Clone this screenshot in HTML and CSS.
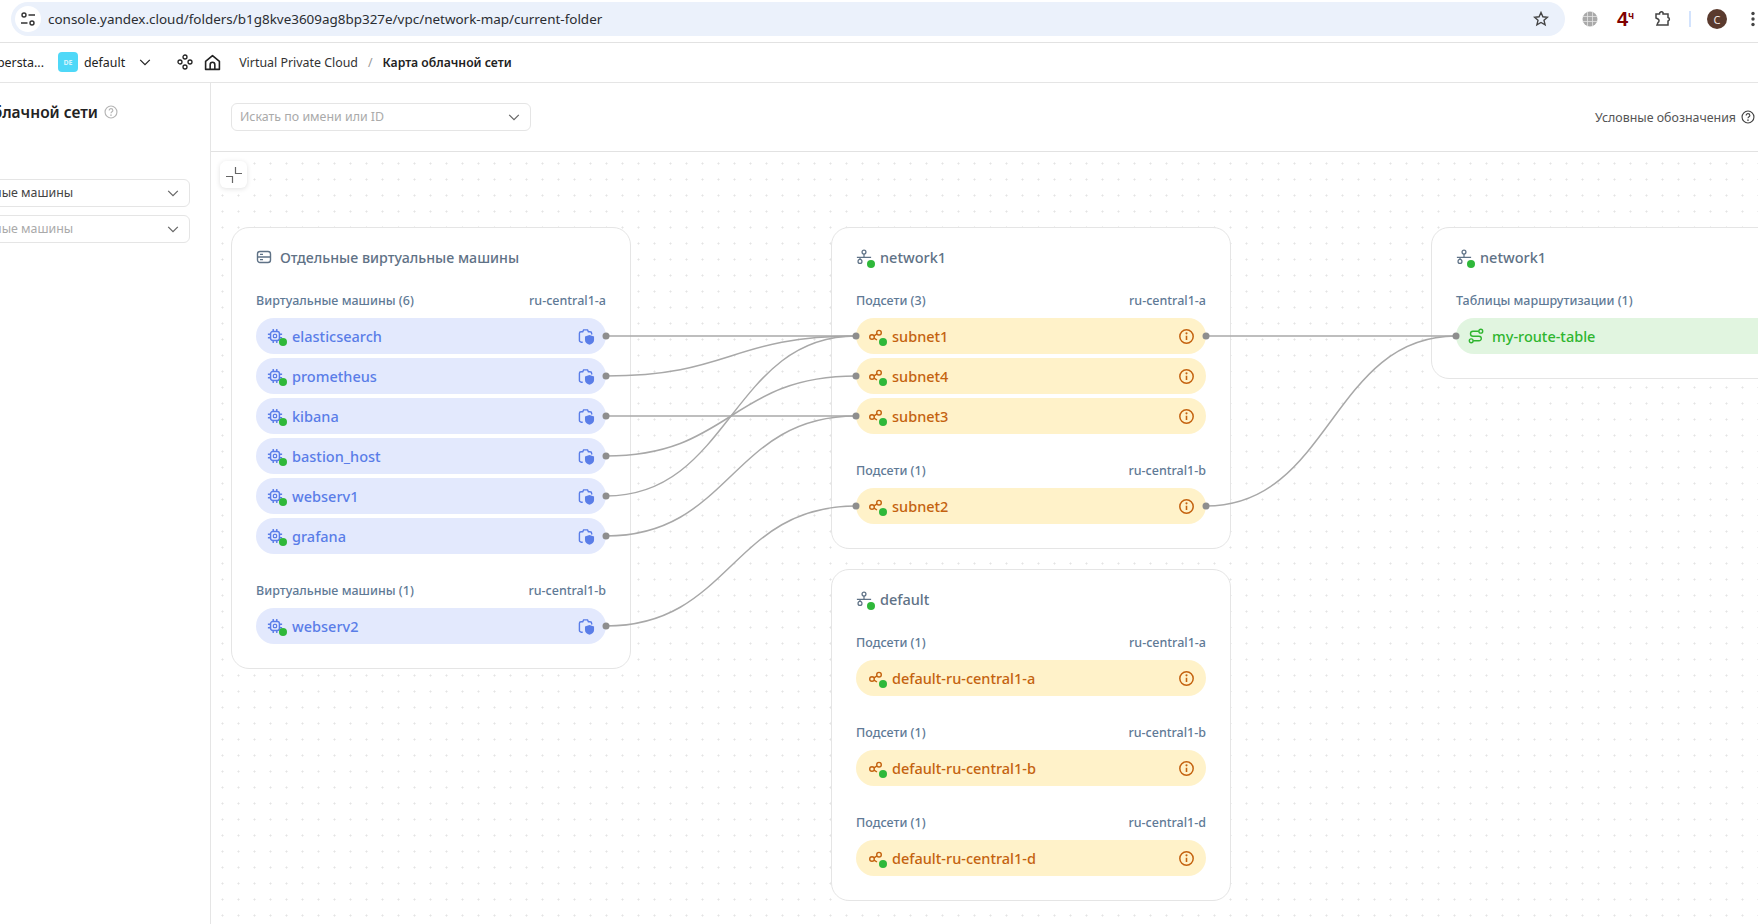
FILE: index.html
```html
<!DOCTYPE html>
<html lang="ru">
<head>
    <meta charset="UTF-8">
    <title>Карта облачной сети</title>
    <link rel="stylesheet" href="styles.css">
</head>
<body>
    <svg class="sprite" width="0" height="0">
        <symbol id="i-cpu" viewBox="0 0 18 18">
            <rect x="4" y="4" width="10" height="10" rx="2.5" fill="none" stroke="currentColor" stroke-width="1.700"/>
            <rect x="7.2" y="7.2" width="3.6" height="3.6" rx="1" fill="none" stroke="currentColor" stroke-width="1.400"/>
            <path d="M7 1v3M11 1v3M7 14v3M11 14v3M1 7h3M1 11h3M14 7h3M14 11h3" stroke="currentColor" stroke-width="1.600" fill="none"/>
        </symbol>
        <symbol id="i-shield" viewBox="0 0 18 18">
            <path d="M5 15H3.4A1.9 1.9 0 0 1 1.5 13V5.6C1.5 4.6 2.3 4 3.2 4H5l.9-2h4.2l.9 2h1.7c1 0 1.800.8 1.800 1.800V7" fill="none" stroke="currentColor" stroke-width="1.5"/>
            <path d="M12.200 7.500l4.800 1.600v3.600c0 2.500-2 4.200-4.800 5-2.800-.8-4.800-2.500-4.800-5V9.100z" fill="currentColor"/>
        </symbol>
        <symbol id="i-share" viewBox="0 0 18 18">
            <circle cx="6" cy="10" r="2.300" fill="none" stroke="currentColor" stroke-width="1.400"/>
            <circle cx="13" cy="5.700" r="2.300" fill="none" stroke="currentColor" stroke-width="1.400"/>
            <path d="M8 8.800l3-1.900M8 11.200l3 1.800" fill="none" stroke="currentColor" stroke-width="1.400"/>
        </symbol>
        <symbol id="i-info" viewBox="0 0 16 16">
            <circle cx="8" cy="8" r="6.300" fill="none" stroke="currentColor" stroke-width="1.400"/>
            <path d="M8 7.300v4" fill="none" stroke="currentColor" stroke-width="1.500"/>
            <circle cx="8" cy="5" r="1" fill="currentColor"/>
        </symbol>
        <symbol id="i-network" viewBox="0 0 18 18">
            <circle cx="9" cy="3.500" r="2.200" fill="none" stroke="currentColor" stroke-width="1.400"/>
            <circle cx="4.500" cy="14" r="2.200" fill="none" stroke="currentColor" stroke-width="1.400"/>
            <path d="M1 9.500h16M9 5.700v3.800M4.500 9.500v2.300" fill="none" stroke="currentColor" stroke-width="1.400"/>
        </symbol>
        <symbol id="i-route" viewBox="0 0 16 16">
            <circle cx="12.800" cy="3.200" r="1.900" fill="none" stroke="currentColor" stroke-width="1.400"/>
            <circle cx="3.200" cy="12.800" r="1.900" fill="none" stroke="currentColor" stroke-width="1.400"/>
            <path d="M10.800 3.200H5a2.500 2.500 0 0 0 0 5h6a2.300 2.300 0 0 1 0 4.600H5.200" fill="none" stroke="currentColor" stroke-width="1.400"/>
        </symbol>
        <symbol id="i-chevron" viewBox="0 0 16 16">
            <path d="M2.500 5.500L8 11l5.500-5.500" fill="none" stroke="currentColor" stroke-width="1.400"/>
        </symbol>
        <symbol id="i-help" viewBox="0 0 16 16">
            <circle cx="8" cy="8" r="6.800" fill="none" stroke="currentColor" stroke-width="1.300"/>
            <path d="M5.900 6.300A2.100 2.100 0 0 1 10.100 6.300C10.100 7.800 8 7.800 8 9.500" fill="none" stroke="currentColor" stroke-width="1.300"/>
            <circle cx="8" cy="11.600" r=".9" fill="currentColor"/>
        </symbol>
    </svg>

    <div class="browser-bar">
        <div class="address">
            <span class="site-btn">
                <svg width="16" height="16" viewBox="0 0 16 16"><circle cx="4" cy="4" r="2" fill="none" stroke="#333" stroke-width="1.400"/><path d="M8.500 4H15M1 12h6.500" stroke="#333" stroke-width="1.400"/><circle cx="12" cy="12" r="2" fill="none" stroke="#333" stroke-width="1.400"/></svg>
            </span>
            <span class="url">console.yandex.cloud/folders/b1g8kve3609ag8bp327e/vpc/network-map/current-folder</span>
            <svg class="star" width="16" height="16" viewBox="0 0 16 16"><path d="M8 1.500l1.900 4.300 4.600.4-3.500 3.100 1.100 4.600L8 11.500l-4.100 2.400L5 9.300 1.500 6.200l4.600-.4z" fill="none" stroke="#444" stroke-width="1.400"/></svg>
        </div>
        <div class="browser-tools">
            <svg width="16" height="16" viewBox="0 0 16 16"><circle cx="8" cy="8" r="7.500" fill="#a9a9a9"/><path d="M.5 5.500h15M.5 10.500h15M5.500 .5v15M10.500 .5v15" stroke="#e4e4e4" stroke-width=".8"/></svg>
            <span class="weather">4<sup>ч</sup></span>
            <svg width="18" height="18" viewBox="0 0 18 18"><path d="M2 4h3.500a2 2 0 0 1 3.500-1.500V4h5v3.500a1.800 1.800 0 0 1 0 3.500V15H3l1-2.500a2 2 0 0 0 0-3.500L2 8z" fill="none" stroke="#444" stroke-width="1.500"/></svg>
            <span class="tool-sep"></span>
            <span class="avatar">C</span>
            <svg width="4" height="16" viewBox="0 0 4 16"><circle cx="2" cy="2.500" r="1.700" fill="#444"/><circle cx="2" cy="8" r="1.700" fill="#444"/><circle cx="2" cy="13.500" r="1.700" fill="#444"/></svg>
        </div>
    </div>

    <header class="topbar">
        <span class="org">persta...</span>
        <span class="badge">DE</span>
        <span class="folder">default</span>
        <svg class="ic chev-dark"><use href="#i-chevron"/></svg>
        <svg class="ic nodes" viewBox="0 0 16 16"><g fill="none" stroke="#222" stroke-width="1.300"><circle cx="8" cy="3" r="2"/><circle cx="3" cy="8" r="2"/><circle cx="13" cy="8" r="2"/><circle cx="8" cy="13" r="2"/></g></svg>
        <svg class="ic home" viewBox="0 0 16 16"><path d="M1.500 14.500V7L8 1.500 14.500 7v7.500zM5.800 14.500V10a2.200 2.200 0 0 1 4.400 0v4.500" fill="none" stroke="#222" stroke-width="1.500" stroke-linejoin="round"/></svg>
        <span class="crumb">Virtual Private Cloud</span>
        <span class="crumb-sep">/</span>
        <span class="crumb-current">Карта облачной сети</span>
    </header>

    <div class="main">
        <aside class="sidebar">
            <div class="side-title">
                <h1>Карта облачной сети</h1>
                <svg class="ic help-light"><use href="#i-help"/></svg>
            </div>
            <div class="side-select">
                <span>Виртуальные машины</span>
                <svg class="ic chev"><use href="#i-chevron"/></svg>
            </div>
            <div class="side-select placeholder">
                <span>Виртуальные машины</span>
                <svg class="ic chev"><use href="#i-chevron"/></svg>
            </div>
        </aside>

        <section class="content">
            <div class="toolbar">
                <div class="search">
                    <span>Искать по имени или ID</span>
                    <svg class="ic chev"><use href="#i-chevron"/></svg>
                </div>
                <div class="legend">
                    <span>Условные обозначения</span>
                    <svg class="ic help"><use href="#i-help"/></svg>
                </div>
            </div>

            <div class="canvas">
                <button class="fit-btn">
                    <svg width="16" height="16" viewBox="0 0 16 16"><path d="M9.500 0v6.500H16M0 9.500h6.500V16" fill="none" stroke="#666" stroke-width="1.200"/></svg>
                </button>

                <div class="column">
                    <div class="card">
                        <div class="card-head card-head-long">
                            <svg class="ic head-ic" viewBox="0 0 16 16"><rect x="1.500" y="2.500" width="13" height="11" rx="2.500" fill="none" stroke="currentColor" stroke-width="1.400"/><path d="M1.500 8h13M4 5.300h3M4 10.700h3" fill="none" stroke="currentColor" stroke-width="1.300"/></svg>
                            <span>Отдельные виртуальные машины</span>
                        </div>
                        <div class="group">
                            <div class="group-label"><span>Виртуальные машины (6)</span><span>ru-central1-a</span></div>
                            <div class="row vm"><span class="row-ic"><svg><use href="#i-cpu"/></svg><i class="status"></i></span><span class="row-name">elasticsearch</span><svg class="row-end"><use href="#i-shield"/></svg></div>
                            <div class="row vm"><span class="row-ic"><svg><use href="#i-cpu"/></svg><i class="status"></i></span><span class="row-name">prometheus</span><svg class="row-end"><use href="#i-shield"/></svg></div>
                            <div class="row vm"><span class="row-ic"><svg><use href="#i-cpu"/></svg><i class="status"></i></span><span class="row-name">kibana</span><svg class="row-end"><use href="#i-shield"/></svg></div>
                            <div class="row vm"><span class="row-ic"><svg><use href="#i-cpu"/></svg><i class="status"></i></span><span class="row-name">bastion_host</span><svg class="row-end"><use href="#i-shield"/></svg></div>
                            <div class="row vm"><span class="row-ic"><svg><use href="#i-cpu"/></svg><i class="status"></i></span><span class="row-name">webserv1</span><svg class="row-end"><use href="#i-shield"/></svg></div>
                            <div class="row vm"><span class="row-ic"><svg><use href="#i-cpu"/></svg><i class="status"></i></span><span class="row-name">grafana</span><svg class="row-end"><use href="#i-shield"/></svg></div>
                        </div>
                        <div class="group">
                            <div class="group-label"><span>Виртуальные машины (1)</span><span>ru-central1-b</span></div>
                            <div class="row vm"><span class="row-ic"><svg><use href="#i-cpu"/></svg><i class="status"></i></span><span class="row-name">webserv2</span><svg class="row-end"><use href="#i-shield"/></svg></div>
                        </div>
                    </div>
                </div>

                <div class="column">
                    <div class="card">
                        <div class="card-head">
                            <span class="head-wrap"><svg class="ic head-ic"><use href="#i-network"/></svg><i class="status"></i></span>
                            <span>network1</span>
                        </div>
                        <div class="group">
                            <div class="group-label"><span>Подсети (3)</span><span>ru-central1-a</span></div>
                            <div class="row subnet"><span class="row-ic"><svg><use href="#i-share"/></svg><i class="status"></i></span><span class="row-name">subnet1</span><svg class="row-end"><use href="#i-info"/></svg></div>
                            <div class="row subnet"><span class="row-ic"><svg><use href="#i-share"/></svg><i class="status"></i></span><span class="row-name">subnet4</span><svg class="row-end"><use href="#i-info"/></svg></div>
                            <div class="row subnet"><span class="row-ic"><svg><use href="#i-share"/></svg><i class="status"></i></span><span class="row-name">subnet3</span><svg class="row-end"><use href="#i-info"/></svg></div>
                        </div>
                        <div class="group">
                            <div class="group-label"><span>Подсети (1)</span><span>ru-central1-b</span></div>
                            <div class="row subnet"><span class="row-ic"><svg><use href="#i-share"/></svg><i class="status"></i></span><span class="row-name">subnet2</span><svg class="row-end"><use href="#i-info"/></svg></div>
                        </div>
                    </div>
                    <div class="card">
                        <div class="card-head">
                            <span class="head-wrap"><svg class="ic head-ic"><use href="#i-network"/></svg><i class="status"></i></span>
                            <span>default</span>
                        </div>
                        <div class="group">
                            <div class="group-label"><span>Подсети (1)</span><span>ru-central1-a</span></div>
                            <div class="row subnet"><span class="row-ic"><svg><use href="#i-share"/></svg><i class="status"></i></span><span class="row-name">default-ru-central1-a</span><svg class="row-end"><use href="#i-info"/></svg></div>
                        </div>
                        <div class="group">
                            <div class="group-label"><span>Подсети (1)</span><span>ru-central1-b</span></div>
                            <div class="row subnet"><span class="row-ic"><svg><use href="#i-share"/></svg><i class="status"></i></span><span class="row-name">default-ru-central1-b</span><svg class="row-end"><use href="#i-info"/></svg></div>
                        </div>
                        <div class="group">
                            <div class="group-label"><span>Подсети (1)</span><span>ru-central1-d</span></div>
                            <div class="row subnet"><span class="row-ic"><svg><use href="#i-share"/></svg><i class="status"></i></span><span class="row-name">default-ru-central1-d</span><svg class="row-end"><use href="#i-info"/></svg></div>
                        </div>
                    </div>
                </div>

                <div class="column">
                    <div class="card">
                        <div class="card-head">
                            <span class="head-wrap"><svg class="ic head-ic"><use href="#i-network"/></svg><i class="status"></i></span>
                            <span>network1</span>
                        </div>
                        <div class="group">
                            <div class="group-label"><span>Таблицы маршрутизации (1)</span></div>
                            <div class="row route"><span class="row-ic"><svg><use href="#i-route"/></svg></span><span class="row-name">my-route-table</span></div>
                        </div>
                    </div>
                </div>

                <!-- links between nodes, coordinates are relative to the canvas -->
                <svg class="links" viewBox="0 0 1547 772">
                    <g class="wires">
                        <path d="M395 184C520 184 520 184 645 184"/>
                        <path d="M395 224C520 224 520 184 645 184"/>
                        <path d="M395 264C520 264 520 264 645 264"/>
                        <path d="M395 304C520 304 520 224 645 224"/>
                        <path d="M395 344C520 344 520 184 645 184"/>
                        <path d="M395 384C520 384 520 264 645 264"/>
                        <path d="M395 474C520 474 520 354 645 354"/>
                        <path d="M995 184C1120 184 1120 184 1245 184"/>
                        <path d="M995 354C1120 354 1120 184 1245 184"/>
                    </g>
                    <g class="ports">
                        <circle cx="395" cy="184" r="3.500"/>
                        <circle cx="395" cy="224" r="3.500"/>
                        <circle cx="395" cy="264" r="3.500"/>
                        <circle cx="395" cy="304" r="3.500"/>
                        <circle cx="395" cy="344" r="3.500"/>
                        <circle cx="395" cy="384" r="3.500"/>
                        <circle cx="395" cy="474" r="3.500"/>
                        <circle cx="645" cy="184" r="3.500"/>
                        <circle cx="645" cy="224" r="3.500"/>
                        <circle cx="645" cy="264" r="3.500"/>
                        <circle cx="645" cy="354" r="3.500"/>
                        <circle cx="995" cy="184" r="3.500"/>
                        <circle cx="995" cy="354" r="3.500"/>
                        <circle cx="1245" cy="184" r="3.500"/>
                    </g>
                </svg>
            </div>
        </section>
    </div>
</body>
</html>
```

FILE: styles.css
```css
* {
    box-sizing: border-box;
}

html, body {
    margin: 0;
    height: 100%;
}

body {
    width: 1758px;
    height: 924px;
    overflow: hidden;
    display: flex;
    flex-direction: column;
    background: #ffffff;
    color: #222;
    font-family: "Noto Sans", Arial, sans-serif;
    font-size: 12.4px;
}

.sprite {
    position: absolute;
}

.ic {
    width: 16px;
    height: 16px;
    flex: none;
}

/* browser chrome */
.browser-bar {
    height: 43px;
    flex: none;
    display: flex;
    align-items: flex-start;
    padding: 2px 0 0 11px;
    border-bottom: 1px solid #e2e2e2;
}

.address {
    width: 1554px;
    height: 34px;
    display: flex;
    align-items: center;
    padding: 0 16px 0 4px;
    background: #ebf1fb;
    border-radius: 17px;
}

.site-btn {
    width: 26px;
    height: 26px;
    display: flex;
    align-items: center;
    justify-content: center;
    background: #ffffff;
    border-radius: 50%;
}

.url {
    margin: -1px 0 0 7px;
    font-size: 13.45px;
    color: #2a2d32;
    flex: 1;
}

.browser-tools {
    height: 34px;
    flex: 1;
    display: flex;
    align-items: center;
    padding-left: 17px;
}

.weather {
    width: 24px;
    margin-left: 19px;
    font-family: "Liberation Sans", Arial, sans-serif;
    font-size: 20px;
    font-weight: 700;
    line-height: 1;
    color: #800000;
}

.weather sup {
    font-size: 10px;
    line-height: 0;
    vertical-align: 7px;
}

.browser-tools svg:nth-of-type(2) {
    margin-left: 13px;
}

.tool-sep {
    width: 2px;
    height: 16px;
    margin-left: 17px;
    background: #d3e3fd;
}

.avatar {
    width: 20px;
    height: 20px;
    margin-left: 16px;
    display: flex;
    align-items: center;
    justify-content: center;
    border-radius: 50%;
    background: #5a3a2e;
    color: #f2e8e4;
    font-size: 11px;
}

.browser-tools svg:nth-of-type(3) {
    margin-left: 24px;
}

/* console header */
.topbar {
    height: 40px;
    flex: none;
    display: flex;
    align-items: center;
    padding-bottom: 1px;
    border-bottom: 1px solid #e5e5e5;
    white-space: nowrap;
}

.org {
    width: 44px;
    overflow: hidden;
    display: flex;
    justify-content: flex-end;
}

.badge {
    width: 20px;
    height: 20px;
    margin-left: 14px;
    display: flex;
    align-items: center;
    justify-content: center;
    border-radius: 4px;
    background: #4fd8f8;
    color: #d4f4fd;
    font-size: 7px;
    font-weight: 700;
}

.folder {
    margin-left: 6px;
}

.chev-dark {
    width: 14px;
    height: 14px;
    margin-left: 13px;
}

.nodes {
    margin-left: 25px;
}

.home {
    width: 17px;
    height: 17px;
    margin-left: 11px;
}

.crumb {
    margin-left: 18px;
    color: #333;
}

.crumb-sep {
    margin: 0 10px;
    color: #999;
}

.crumb-current {
    font-size: 12.2px;
    font-weight: 600;
    color: #222;
}

/* main area */
.main {
    flex: 1;
    min-height: 0;
    display: flex;
}

.sidebar {
    width: 211px;
    flex: none;
    padding: 17px 20px 0 0;
    display: flex;
    flex-direction: column;
    align-items: flex-end;
    overflow: hidden;
    border-right: 1px solid #e5e5e5;
    white-space: nowrap;
}

.side-title {
    height: 24px;
    margin-right: 72px;
    margin-bottom: 55px;
    display: flex;
    align-items: center;
    gap: 6px;
    flex: none;
}

.side-title h1 {
    margin: 0;
    font-size: 15.5px;
    font-weight: 600;
    color: #222;
}

.help-light {
    width: 14px;
    height: 14px;
    color: #b5b5b5;
}

.side-select {
    width: 263px;
    height: 28px;
    margin-bottom: 8px;
    padding: 0 9px 1px 10px;
    flex: none;
    display: flex;
    align-items: center;
    justify-content: space-between;
    border: 1px solid #e5e5e5;
    border-radius: 6px;
    color: #444;
}

.side-select.placeholder {
    color: #aaa;
}

.chev {
    width: 14px;
    height: 14px;
    color: #666;
}

.content {
    flex: 1;
    min-width: 0;
    display: flex;
    flex-direction: column;
}

.toolbar {
    height: 69px;
    flex: none;
    display: flex;
    align-items: center;
    justify-content: space-between;
    padding: 0 3px 0 20px;
    border-bottom: 1px solid #e2e2e2;
}

.search {
    width: 300px;
    height: 28px;
    padding: 0 9px 1px 8px;
    display: flex;
    align-items: center;
    justify-content: space-between;
    border: 1px solid #e5e5e5;
    border-radius: 6px;
    color: #aaa;
}

.legend {
    display: flex;
    align-items: center;
    gap: 5px;
    color: #555;
}

.help {
    width: 14px;
    height: 14px;
    color: #444;
}

/* map */
.canvas {
    flex: 1;
    min-height: 0;
    position: relative;
    display: flex;
    align-items: flex-start;
    gap: 200px;
    padding: 75px 0 0 20px;
    overflow: hidden;
    background-image: radial-gradient(circle at 1.5px 1.5px, #e4e4e4 .8px, transparent 1.3px);
    background-size: 16px 16px;
    background-position: 10px 10px;
}

.fit-btn {
    position: absolute;
    left: 9px;
    top: 9px;
    width: 27px;
    height: 27px;
    padding: 0;
    display: flex;
    align-items: center;
    justify-content: center;
    background: #ffffff;
    border: 0;
    border-radius: 6px;
    box-shadow: 0 1px 5px rgba(0, 0, 0, 0.12);
}

.column {
    width: 400px;
    flex: none;
    display: flex;
    flex-direction: column;
    gap: 20px;
}

.card {
    padding: 17px 24px 24px;
    background: #ffffff;
    border: 1px solid #e5e5e5;
    border-radius: 18px;
}

.card-head {
    height: 24px;
    display: flex;
    align-items: center;
    gap: 8px;
    font-size: 14.5px;
    font-weight: 500;
    color: #5f7286;
}

.card-head-long {
    font-size: 14.2px;
}

.head-wrap {
    position: relative;
    display: flex;
}

.head-ic {
    width: 16px;
    height: 16px;
    color: #5f7286;
}

.group {
    margin-top: 22px;
}

.group + .group {
    margin-top: 27px;
}

.group-label {
    height: 18px;
    margin-bottom: 9px;
    display: flex;
    align-items: center;
    justify-content: space-between;
    font-size: 12.5px;
    font-weight: 500;
    color: #5f7a96;
}

.row {
    height: 36px;
    padding: 0 10px 1px;
    display: flex;
    align-items: center;
    border-radius: 18px;
    font-size: 14.5px;
    font-weight: 500;
}

.row + .row {
    margin-top: 4px;
}

.row-ic {
    width: 18px;
    height: 18px;
    margin: 1px 8px 0 0;
    position: relative;
    flex: none;
    display: flex;
    align-items: center;
    justify-content: center;
}

.row-ic svg {
    width: 16px;
    height: 16px;
    display: block;
}

.subnet .row-ic svg {
    width: 18px;
    height: 18px;
}

.row-name {
    flex: 1;
}

.row-end {
    width: 17px;
    height: 17px;
    flex: none;
    margin: 1px 1px 0 0;
}

.status {
    position: absolute;
    right: -3px;
    bottom: -1px;
    width: 8px;
    height: 8px;
    border-radius: 50%;
    background: #2fb83a;
}

.head-wrap .status {
    bottom: -3px;
}

.vm {
    background: #e3e9fd;
    color: #5a7de8;
}

.subnet {
    background: #fff2c9;
    color: #c4620f;
}

.route {
    background: #e1f5e0;
    color: #2fb52f;
}

.route .row-ic {
    width: 16px;
    height: 16px;
    margin: 1px 8px 0 2px;
}

.links {
    position: absolute;
    left: 0;
    top: 0;
    width: 1547px;
    height: 772px;
    pointer-events: none;
}

.wires path {
    fill: none;
    stroke: #a8a8a8;
    stroke-width: 1.5;
}

.ports circle {
    fill: #8e8e8e;
}
```
